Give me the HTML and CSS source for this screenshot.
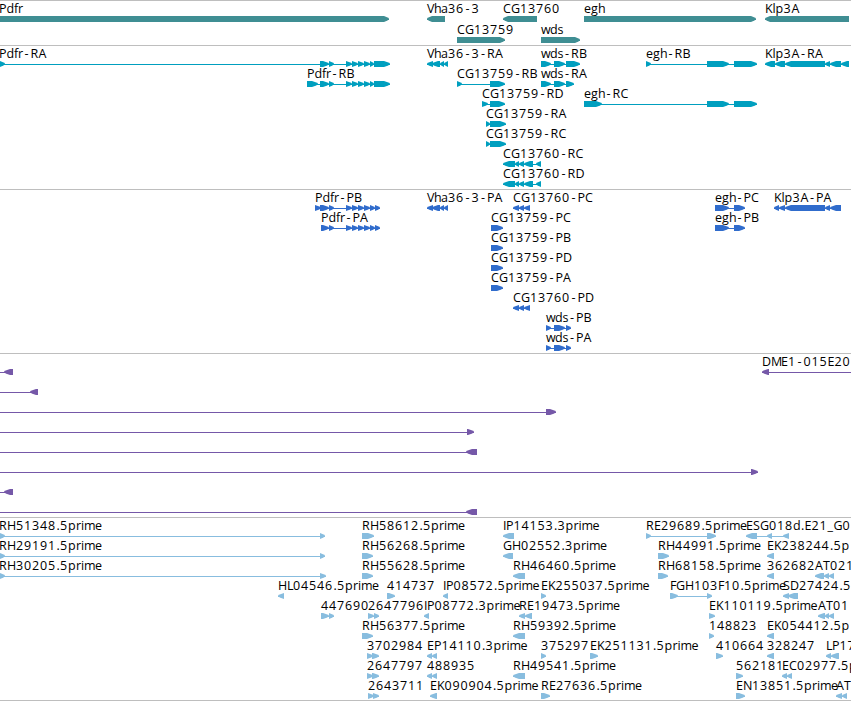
FILE: index.html
```
<!DOCTYPE html>
<html lang="en">
<head>
    <meta charset="UTF-8">
    <meta name="viewport" content="width=device-width, initial-scale=1.0">
    <title>Genome Browser</title>
    <link rel="stylesheet" href="styles.css">
</head>
<body>
    <main class="browser">
        <section class="track track-gene"><svg class="track-canvas" id="gene"></svg></section>
        <section class="track track-mrna"><svg class="track-canvas" id="mrna"></svg></section>
        <section class="track track-cds"><svg class="track-canvas" id="cds"></svg></section>
        <section class="track track-bac"><svg class="track-canvas" id="bac"></svg></section>
        <section class="track track-est"><svg class="track-canvas" id="est"></svg></section>
    </main>
    <script src="script.js"></script>
</body>
</html>
```

FILE: styles.css
```
:root {
    --rule-color: #bebebe;
    --gene-color: #3f8e93;
    --mrna-color: #009fbf;
    --cds-color: #306ccc;
    --bac-color: #7558a8;
    --est-color: #88bddf;
}

* {
    margin: 0;
    padding: 0;
    box-sizing: border-box;
}

body {
    background: #fff;
    overflow: hidden;
}

.browser {
    display: flex;
    flex-direction: column;
    width: 851px;
    border-bottom: 1px solid var(--rule-color);
}

.track {
    border-top: 1px solid var(--rule-color);
    overflow: hidden;
}

.track-canvas {
    display: block;
    width: 100%;
    height: 100%;
}

.track-gene { height: 45px; color: var(--gene-color); }
.track-mrna { height: 144px; color: var(--mrna-color); }
.track-cds { height: 164px; color: var(--cds-color); }
.track-bac { height: 164px; color: var(--bac-color); }
.track-est { height: 183px; color: var(--est-color); }

.feature-label {
    font-family: "Open Sans", "Noto Sans", sans-serif;
    font-size: 12.5px;
    fill: #000;
}

.feature-block,
.feature-line {
    fill: currentColor;
}
```

FILE: script.js
```
const SVG_NS = 'http://www.w3.org/2000/svg';

// Advance of each glyph used in the labels, digits are 8
const ADVANCE = {
    A: 8, B: 6.5, C: 8, D: 9, E: 7, F: 6, G: 9, H: 9, I: 3, K: 7.5, L: 6, M: 10,
    N: 9, P: 7.5, R: 8, S: 7, T: 7, V: 7,
    a: 7, d: 7.5, e: 7, f: 4, g: 7, h: 7, i: 3, l: 3, m: 11, p: 8, r: 5, s: 6, w: 9,
    '-': 7.5, '.': 4, '_': 6
};

// Narrow glyphs sit in the middle of their cell
const INSET = { '-': 1.5, '.': 0.5 };

const pdfrTail = [[346, 352], [352, 358], [358, 364], [364, 370]];
const vha = [[427, 433], [432, 440], [440, 444], [444, 448]];
const cg60 = [[503, 515], [515, 519], [519, 524], [524, 533], [536, 541]];
const klpCore = [[785, 825], [825, 830], [830, 841]];

// row, label, strand, blocks, optional line range
const tracks = {
    gene: { pitch: 21, head: 5, features: [
        [0, 'Pdfr', 1, [[0, 389]]],
        [0, 'Vha36-3', -1, [[427, 445]]],
        [0, 'CG13760', -1, [[503, 537]]],
        [0, 'egh', 1, [[584, 756]]],
        [0, 'Klp3A', -1, [[765, 849]]],
        [1, 'CG13759', 1, [[457, 505]]],
        [1, 'wds', 1, [[541, 580]]]
    ] },
    mrna: { pitch: 20, head: 6, features: [
        [0, 'Pdfr-RA', 1, [[0, 5], [320, 329], [329, 334], ...pdfrTail, [370, 374], [374, 390]]],
        [0, 'Vha36-3-RA', -1, vha],
        [0, 'wds-RB', 1, [[541, 551], [554, 565], [566, 580]]],
        [0, 'egh-RB', 1, [[646, 651], [707, 729], [734, 757]]],
        [0, 'Klp3A-RA', -1, [[765, 775], [775, 785], ...klpCore, [841, 849]]],
        [1, 'Pdfr-RB', 1, [[307, 318], [320, 329], [329, 334], ...pdfrTail, [370, 374], [374, 390]]],
        [1, 'CG13759-RB', 1, [[457, 462], [490, 505]]],
        [1, 'wds-RA', 1, [[541, 551], [554, 565], [566, 574]]],
        [2, 'CG13759-RD', 1, [[482, 488], [490, 505]]],
        [2, 'egh-RC', 1, [[584, 602], [707, 729], [734, 757]]],
        [3, 'CG13759-RA', 1, [[486, 490], [490, 506]]],
        [4, 'CG13759-RC', 1, [[486, 490], [490, 506]]],
        [5, 'CG13760-RC', -1, cg60],
        [6, 'CG13760-RD', -1, cg60]
    ] },
    cds: { pitch: 20, head: 6, features: [
        [0, 'Pdfr-PB', 1, [[315, 321], [320, 329], [329, 334], ...pdfrTail, [370, 375], [375, 380]]],
        [0, 'Vha36-3-PA', -1, vha],
        [0, 'CG13760-PC', -1, [[513, 519], [519, 524], [524, 530]]],
        [0, 'egh-PC', 1, [[715, 729], [734, 745]]],
        [0, 'Klp3A-PA', -1, [[774, 779], [779, 785], ...klpCore]],
        [1, 'Pdfr-PA', 1, [[321, 329], [329, 334], ...pdfrTail, [370, 375], [375, 380]]],
        [1, 'CG13759-PC', 1, [[491, 503]]],
        [1, 'egh-PB', 1, [[715, 729], [734, 745]]],
        [2, 'CG13759-PB', 1, [[491, 503]]],
        [3, 'CG13759-PD', 1, [[491, 503]]],
        [4, 'CG13759-PA', 1, [[491, 503]]],
        [5, 'CG13760-PD', -1, [[513, 519], [519, 524], [524, 530]]],
        [6, 'wds-PB', 1, [[546, 551], [554, 565], [566, 571]]],
        [7, 'wds-PA', 1, [[546, 551], [554, 565], [566, 571]]]
    ] },
    bac: { pitch: 20, head: 6, features: [
        [0, '', -1, [[4, 13]], [0, 13]],
        [0, 'DME1-015E20', -1, [[762, 769]], [762, 851]],
        [1, '', -1, [[30, 38]], [0, 38]],
        [2, '', 1, [[546, 556]], [0, 556]],
        [3, '', 1, [[467, 474]], [0, 474]],
        [4, '', -1, [[466, 477]], [0, 477]],
        [5, '', 1, [[751, 758]], [0, 758]],
        [6, '', -1, [[4, 13]], [0, 13]],
        [7, '', -1, [[466, 477]], [0, 477]]
    ] },
    est: { pitch: 20, head: 6, features: [
        [0, 'RH51348.5prime', 1, [[0, 5], [320, 325]]],
        [0, 'RH58612.5prime', 1, [[362, 374]]],
        [0, 'IP14153.3prime', -1, [[503, 514]]],
        [0, 'RE29689.5prime', 1, [[646, 651], [707, 716]]],
        [0, 'ESG018d.E21_G0', -1, [[746, 757], [767, 772], [783, 789]]],
        [1, 'RH29191.5prime', 1, [[0, 5], [320, 325]]],
        [1, 'RH56268.5prime', 1, [[362, 373]]],
        [1, 'GH02552.3prime', -1, [[503, 513]]],
        [1, 'RH44991.5prime', 1, [[658, 669]]],
        [1, 'EK238244.5p', -1, [[767, 774]]],
        [2, 'RH30205.5prime', 1, [[0, 5], [320, 326]]],
        [2, 'RH55628.5prime', 1, [[362, 373]]],
        [2, 'RH46460.5prime', -1, [[513, 525]]],
        [2, 'RH68158.5prime', 1, [[658, 668]]],
        [2, '362682', -1, [[767, 774]]],
        [2, 'AT021', -1, [[815, 824], [824, 829], [829, 834]]],
        [3, 'HL04546.5prime', -1, [[278, 284]]],
        [3, '414737', 1, [[387, 395]]],
        [3, 'IP08572.5prime', -1, [[443, 448]]],
        [3, 'EK255037.5prime', 1, [[541, 546]]],
        [3, 'FGH103F10.5prime', 1, [[670, 678], [707, 712]]],
        [3, 'SD27424.5', -1, [[783, 789], [788, 798]]],
        [4, '447690', 1, [[321, 329], [329, 334]]],
        [4, '2647796', 1, [[368, 374], [374, 379]]],
        [4, 'IP08772.3prime', -1, [[424, 429]]],
        [4, 'RE19473.5prime', -1, [[519, 525], [525, 532]]],
        [4, 'EK110119.5prime', 1, [[709, 715]]],
        [4, 'AT01', -1, [[818, 825], [825, 829], [829, 834]]],
        [5, 'RH56377.5prime', 1, [[362, 373]]],
        [5, 'RH59392.5prime', -1, [[513, 525]]],
        [5, '148823', 1, [[709, 714]]],
        [5, 'EK054412.5p', -1, [[767, 774]]],
        [6, '3702984', 1, [[367, 373], [372, 379]]],
        [6, 'EP14110.3prime', -1, [[427, 432], [432, 437]]],
        [6, '375297', 1, [[541, 546]]],
        [6, 'EK251131.5prime', 1, [[590, 598]]],
        [6, '410664', 1, [[716, 723]]],
        [6, '328247', -1, [[767, 774]]],
        [6, 'LP17', -1, [[826, 831], [831, 839]]],
        [7, '2647797', 1, [[367, 373], [372, 379]]],
        [7, '488935', -1, [[427, 432], [432, 437]]],
        [7, 'RH49541.5prime', -1, [[513, 525]]],
        [7, '562181', 1, [[736, 743]]],
        [7, 'EC02977.5p', -1, [[782, 787], [787, 792]]],
        [8, '2643711', 1, [[368, 374], [373, 379]]],
        [8, 'EK090904.5prime', -1, [[430, 437]]],
        [8, 'RE27636.5prime', 1, [[541, 550]]],
        [8, 'EN13851.5prime', 1, [[736, 745]]],
        [8, 'AT', -1, [[836, 842], [842, 847]]]
    ] }
};

function add(svg, tag, attrs) {
    const el = document.createElementNS(SVG_NS, tag);
    for (const key in attrs) {
        el.setAttribute(key, attrs[key]);
    }
    svg.appendChild(el);
    return el;
}

function drawLabel(svg, text, x, y) {
    const xs = [];
    for (const ch of text) {
        xs.push(x + (INSET[ch] || 0));
        x += ADVANCE[ch] || 8;
    }
    add(svg, 'text', { class: 'feature-label', x: xs.join(' '), y: y }).textContent = text;
}

// Block with an arrow head on the side the strand points to
function drawBlock(svg, start, end, strand, top, maxHead) {
    const head = Math.min(maxHead, end - start);
    const tip = strand > 0 ? end : start;
    const tail = strand > 0 ? start : end;
    const neck = tip - strand * head;
    const mid = tip - strand * head * 0.4;
    const points = [
        [tail, top], [neck, top], [mid, top + 1.2], [tip, top + 2.4],
        [tip, top + 3.6], [mid, top + 4.8], [neck, top + 6], [tail, top + 6]
    ];
    add(svg, 'polygon', { class: 'feature-block', points: points.join(' ') });
}

for (const id in tracks) {
    const svg = document.getElementById(id);
    const track = tracks[id];

    track.features.forEach(([row, label, strand, blocks, range]) => {
        const top = row * track.pitch;
        const start = range ? range[0] : blocks[0][0];
        const end = range ? range[1] : blocks[blocks.length - 1][1];

        add(svg, 'rect', { class: 'feature-line', x: start, y: top + 18, width: end - start, height: 1 });
        blocks.forEach(([a, b]) => drawBlock(svg, a, b, strand, top + 15, track.head));
        if (label) {
            drawLabel(svg, label, start || -1, top + 12);
        }
    });
}
```
